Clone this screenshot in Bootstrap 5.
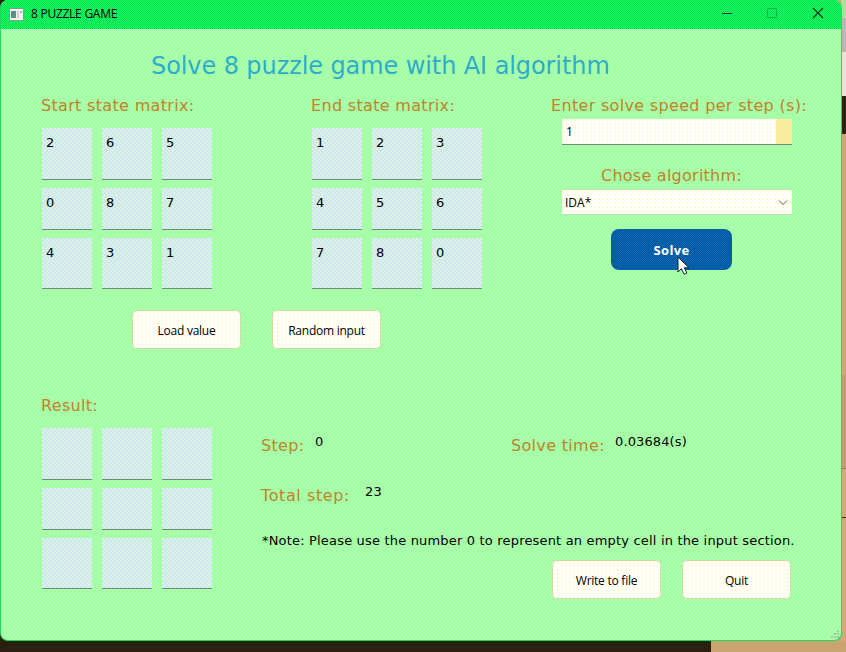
<!DOCTYPE html>
<html lang="en">
<head>
<meta charset="utf-8">
<title>8 PUZZLE GAME</title>
<link href="https://cdn.jsdelivr.net/npm/bootstrap@5.3.0/dist/css/bootstrap.min.css" rel="stylesheet">
<style>
html,body{height:652px;overflow:hidden}
body{font-family:"DejaVu Sans",sans-serif;font-size:13px;line-height:20px;color:#000;
 background:linear-gradient(#aedf9c 0 18px,#bbb4b8 18px 52px,#e6e3df 52px 96px,#292215 96px 134px,#cfa674 134px 375px,#c49b72 375px 468px,#8f7a70 468px 469px,#d2aa74 469px 517px,#342c22 517px 518px,#d2aa74 518px) right top/5px 641px no-repeat,
 linear-gradient(90deg,#29210f 711px,#c9a572 711px)}
.titlebar,.solve{background:
 radial-gradient(circle at .5px .5px,var(--dot) .7px,transparent .7px) 0 0/2px 2px,
 radial-gradient(circle at .5px .5px,var(--dot) .7px,transparent .7px) 1px 1px/2px 2px,
 var(--base)}
.win,.cell,.spin{background:
 radial-gradient(circle at 1px 1px,var(--dot) .8px,transparent .9px) 0 0/4px 4px,
 radial-gradient(circle at 1px 1px,var(--dot) .8px,transparent .9px) 2px 2px/4px 4px,
 var(--base)}
.win{--dot:#acff98;--base:#a2ffb8;width:842px;height:641px;border:1px solid #24d763;border-top:0;border-radius:8px;overflow:hidden}
.titlebar{--dot:#20fb52;--base:#00df60;height:29px;padding-left:8px;font:12px "Open Sans",sans-serif}
.caption-text{letter-spacing:-.26px;margin-left:7px;margin-top:-2px}
.ctl{width:45px;height:26px;margin-top:-3px}
.heading{height:38px;margin:18px 0 0 150px;font-size:24px;line-height:38px;color:#2eacc9;letter-spacing:-.09px}
.lbl{font-size:16px;line-height:20px;height:20px;color:#bd8428;white-space:nowrap;letter-spacing:.32px}
.zone{height:299px;padding:11px 0 0 40px}
.colA{width:270px}.colB{width:240px}
.board{display:grid;grid-template-columns:repeat(3,50px);grid-template-rows:52px 42px 51px;gap:8px 10px;margin:12px 0 0 1px}
.cell{--dot:#dff0dc;--base:#c8e8f8;padding:5px 0 0 4px;border-bottom:1px solid #6f8b7c}
.white{background:radial-gradient(circle at 1px 1px,#fffad0 .7px,transparent .8px) 0 0/4px 4px,#fffffc}
.pbtn{width:109px;height:39px;padding:2px 0 0;font:12px "Open Sans",sans-serif;color:#000;border:1px solid #d6d8ac;border-radius:5px;letter-spacing:-.25px}
.pair{gap:31px;margin:21px 0 0 91px}
.speed{width:230px;height:26px;margin:3px 0 0 11px;border-bottom:1px solid #6f8b7c;padding-left:4px;font:12px "Open Sans",sans-serif}
.spin{--dot:#fff08a;--base:#f4e8b4;width:16px}
.choose{margin:21px 0 0 50px;letter-spacing:.25px}
.algo{width:230px;height:26px;margin:3px 0 0 11px;border:1px solid #bfe0b4;border-width:1px 0;padding:1px 4px 0 3px;font:12px "Open Sans",sans-serif}
.solve{--dot:#0a68b0;--base:#0056a0;width:121px;height:41px;margin:14px 0 0 60px;padding:1px 0 0;border:0;border-radius:8px;color:#fff;font:bold 13px "Open Sans",sans-serif;letter-spacing:.35px}
.cursor{position:absolute;left:66px;top:27px}
.lower{padding:12px 0 0 40px}
.result{width:220px}
.info{padding-top:40px}
.total{margin-top:30px}
.total .lbl{letter-spacing:.6px}
.w-step{width:54px}.w-count{width:196px}.w-time{width:104px}
.val{margin-top:-4px;line-height:20px;letter-spacing:.12px}
.note{margin:25px 0 0 1px;letter-spacing:.18px;white-space:nowrap}
.end-btns{margin:9px 0 0 291px;gap:21px}
.grip{position:absolute;left:830px;top:629px}
</style>
</head>
<body>
<main class="win">
<header class="titlebar d-flex align-items-center">
<svg width="15" height="13"><path d="M.5.5h14v12H.5z" fill="#f0f2ee" stroke="#819d88"/><path d="M2 3h5v7H2z" fill="#5b8f89"/><path d="M8 3h2v7H8z" fill="#d5cbd5"/><path d="M11 3h2v2h-2z" fill="#c6a5bd"/></svg>
<span class="caption-text">8 PUZZLE GAME</span>
<div class="d-flex ms-auto">
<svg class="ctl" viewBox="0 0 45 26"><path d="M16 13.500h10" stroke="#143a18"/></svg>
<svg class="ctl" viewBox="0 0 45 26"><rect x="16.500" y="8.500" width="9" height="9" rx="1" fill="none" stroke="#0bb548"/></svg>
<svg class="ctl" viewBox="0 0 45 26"><path d="M17 8l10 10M27 8L17 18" stroke="#123417" stroke-width="1.200"/></svg>
</div>
</header>
<h1 class="heading fw-normal">Solve 8 puzzle game with AI algorithm</h1>
<section class="zone d-flex">
<div class="colA">
<div class="lbl">Start state matrix:</div>
<div class="board"><div class="cell">2</div><div class="cell">6</div><div class="cell">5</div><div class="cell">0</div><div class="cell">8</div><div class="cell">7</div><div class="cell">4</div><div class="cell">3</div><div class="cell">1</div></div>
<div class="pair d-flex"><button class="pbtn white flex-shrink-0">Load value</button><button class="pbtn white flex-shrink-0">Random input</button></div>
</div>
<div class="colB">
<div class="lbl">End state matrix:</div>
<div class="board"><div class="cell">1</div><div class="cell">2</div><div class="cell">3</div><div class="cell">4</div><div class="cell">5</div><div class="cell">6</div><div class="cell">7</div><div class="cell">8</div><div class="cell">0</div></div>
</div>
<div>
<div class="lbl">Enter solve speed per step (s):</div>
<div class="speed white d-flex align-items-center justify-content-between"><span>1</span><span class="spin align-self-stretch"></span></div>
<div class="lbl choose">Chose algorithm:</div>
<div class="algo white d-flex align-items-center justify-content-between"><span>IDA*</span><svg width="10" height="6"><path d="M1 .5l4 4 4-4" fill="none" stroke="#555b45"/></svg></div>
<button class="solve position-relative">Solve<svg class="cursor" width="14" height="20"><path d="M1 1v15l3.500-3.300 2.600 5.600 2.700-1.200-2.500-5.300H12z" fill="#fff" stroke="#10202c"/></svg></button>
</div>
</section>
<section class="lower d-flex">
<div class="result"><div class="lbl">Result:</div>
<div class="board"><div class="cell"></div><div class="cell"></div><div class="cell"></div><div class="cell"></div><div class="cell"></div><div class="cell"></div><div class="cell"></div><div class="cell"></div><div class="cell"></div></div></div>
<div class="info">
<div class="d-flex"><div class="lbl w-step">Step:</div><div class="val w-count">0</div><div class="lbl w-time">Solve time:</div><div class="val">0.03684(s)</div></div>
<div class="d-flex total"><div class="lbl w-time">Total step:</div><div class="val">23</div></div>
<div class="note">*Note: Please use the number 0 to represent an empty cell in the input section.</div>
<div class="end-btns d-flex"><button class="pbtn white">Write to file</button><button class="pbtn white">Quit</button></div>
</div>
</section>
</main>
<svg class="grip" width="10" height="10" fill="#a3c4a5"><path d="M7 1h2v2H7zM4 4h2v2H4zM7 4h2v2H7zM1 7h2v2H1zM4 7h2v2H4zM7 7h2v2H7z"/></svg>
<script src="https://cdn.jsdelivr.net/npm/bootstrap@5.3.0/dist/js/bootstrap.bundle.min.js"></script>
</body>
</html>
